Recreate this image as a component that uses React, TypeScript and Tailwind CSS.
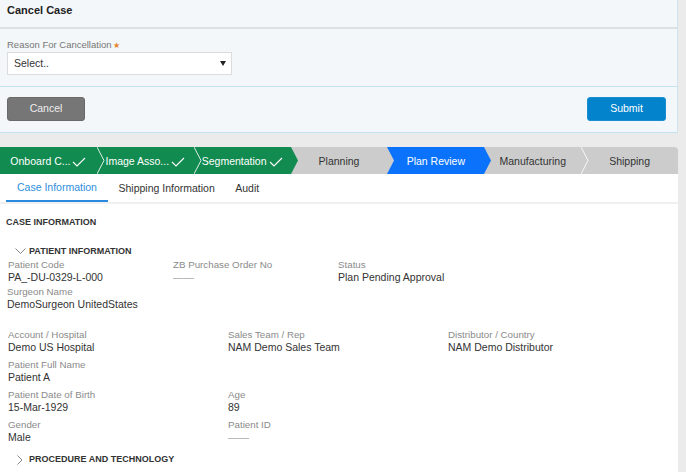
import React from "react";

type Step = { label: string; color: "green" | "blue" | "gray"; done?: boolean };

const steps: Step[] = [
  { label: "Onboard C...", color: "green", done: true },
  { label: "Image Asso...", color: "green", done: true },
  { label: "Segmentation", color: "green", done: true },
  { label: "Planning", color: "gray" },
  { label: "Plan Review", color: "blue" },
  { label: "Manufacturing", color: "gray" },
  { label: "Shipping", color: "gray" },
];

const hex: Record<string, string> = { green: "#118b50", blue: "#0b73fb", gray: "#cccccc" };

function StepBar() {
  return (
    <div className="flex h-[27px] w-[678px] overflow-hidden rounded-tr-[4px]">
      {steps.map((s, i) => {
        const next = steps[i + 1];
        const bg =
          s.color === "green" ? "bg-[#118b50] text-white" : s.color === "blue" ? "bg-[#0b73fb] text-white" : "bg-[#cccccc] text-[#333]";
        return (
          <div key={s.label} className={`relative flex flex-1 items-center justify-center pt-[2px] text-[10.5px] ${bg}`}>
            <span className="relative z-20 flex items-center">
              {s.label}
              {s.done && (
                <svg width="14" height="10" viewBox="0 0 14 10" className="ml-[2px]">
                  <polyline points="1,5 5,9 13,1" fill="none" stroke="white" strokeWidth="1.1" />
                </svg>
              )}
            </span>
            {next && (
              <svg width="8" height="27" viewBox="0 0 8 27" className="absolute left-full top-0 z-10">
                <polygon points="0,0 7,13.5 0,27" fill={hex[s.color]} />
                {next.color === s.color && (
                  <polyline points="0,0 7,13.5 0,27" fill="none" stroke="#ffffff" strokeOpacity="0.85" strokeWidth="1" />
                )}
              </svg>
            )}
          </div>
        );
      })}
    </div>
  );
}

function Field({ label, value, empty }: { label: string; value?: string; empty?: boolean }) {
  return (
    <div>
      <div className="text-[9.75px] leading-[12px] text-[#8a8a8a]">{label}</div>
      <div className={`text-[10.5px] leading-[13px] ${empty ? "text-[#aaa]" : "text-[#333]"}`}>{empty ? "——" : value}</div>
    </div>
  );
}

export default function App() {
  return (
    <div className="h-[472px] w-[686px] overflow-hidden bg-[#ebebeb] font-['Liberation_Sans',Arial,sans-serif]">
      {/* Cancel case panel */}
      <div className="w-[678px] border-r border-[#cfe4f0] bg-[#f3f7f9]">
        <div className="h-[29px] border-b-2 border-[#dde1e3] px-[7px] pt-[4px] text-[11px] font-bold leading-[13px] text-[#222]">
          Cancel Case
        </div>
        <div className="border-b border-[#c3e1f1] px-[7px] pb-[11px] pt-[9px]">
          <div className="text-[9.5px] leading-[13px] text-[#777]">
            Reason For Cancellation<span className="ml-[1px] text-[8px] text-[#e8862a]">★</span>
          </div>
          <div className="flex h-[23px] w-[225px] items-center justify-between border border-[#dcdcdc] bg-white pl-[6px] pr-[5px] text-[10.5px] text-[#333]">
            <span>Select..</span>
            <svg width="6" height="5" viewBox="0 0 6 5">
              <polygon points="0,0 6,0 3,5" fill="#222" />
            </svg>
          </div>
        </div>
        <div className="flex items-center justify-between border-b border-[#c3e1f1] pb-[11px] pl-[7px] pr-[11px] pt-[10px]">
          <button className="h-[24px] w-[78px] rounded-[3px] border border-[#6a6a6a] bg-[#767676] text-[10.5px] text-[#eeeeee]">
            Cancel
          </button>
          <button className="h-[24px] w-[79px] rounded-[3px] border border-[#1a8ed0] bg-[#0283cc] text-[10.5px] text-white">
            Submit
          </button>
        </div>
      </div>

      <div className="mt-[14px]">
        <StepBar />
      </div>

      {/* Content */}
      <div className="h-[300px] w-[678px] bg-white">
        <div className="flex h-[30px] border-b-2 border-[#f0f0f0] pl-[6px] text-[10.5px] text-[#333]">
          <div className="flex h-[28px] items-center border-b-2 border-[#2a8ae0] px-[11px] pt-[1px] text-[#2d8fdd]">Case Information</div>
          <div className="flex h-[28px] items-center px-[10.5px] pt-[1px]">Shipping Information</div>
          <div className="flex h-[28px] items-center px-[10px] pt-[1px]">Audit</div>
        </div>

        <div className="pl-[6px] pt-[13px] text-[9px] font-bold leading-[11px] text-[#333]">CASE INFORMATION</div>

        <div className="mt-[18px] flex items-center pl-[15px] text-[9px] font-bold leading-[11px] text-[#333]">
          <svg width="11" height="7" viewBox="0 0 11 7" className="mr-[3px]">
            <polyline points="0.5,0.5 5.5,5.5 10.5,0.5" fill="none" stroke="#888" strokeWidth="1" />
          </svg>
          PATIENT INFORMATION
        </div>

        <div className="mt-[2px] grid grid-cols-[165px_165px_165px] gap-y-[2px] pl-[8px]">
          <Field label="Patient Code" value="PA_-DU-0329-L-000" />
          <Field label="ZB Purchase Order No" empty />
          <Field label="Status" value="Plan Pending Approval" />
          <div className="-ml-[1px]">
            <Field label="Surgeon Name" value="DemoSurgeon UnitedStates" />
          </div>
        </div>

        <div className="mt-[18px] grid grid-cols-[220px_220px_220px] gap-y-[5px] pl-[8px]">
          <Field label="Account / Hospital" value="Demo US Hospital" />
          <Field label="Sales Team / Rep" value="NAM Demo Sales Team" />
          <Field label="Distributor / Country" value="NAM Demo Distributor" />
          <Field label="Patient Full Name" value="Patient A" />
          <div />
          <div />
          <Field label="Patient Date of Birth" value="15-Mar-1929" />
          <Field label="Age" value="89" />
          <div />
          <Field label="Gender" value="Male" />
          <Field label="Patient ID" empty />
        </div>

        <div className="mt-[10px] flex items-center pl-[17px] text-[9px] font-bold leading-[11px] text-[#333]">
          <svg width="6" height="10" viewBox="0 0 6 10" className="mr-[6px]">
            <polyline points="0.5,0.5 5,5 0.5,9.5" fill="none" stroke="#888" strokeWidth="1" />
          </svg>
          PROCEDURE AND TECHNOLOGY
        </div>
      </div>
    </div>
  );
}
